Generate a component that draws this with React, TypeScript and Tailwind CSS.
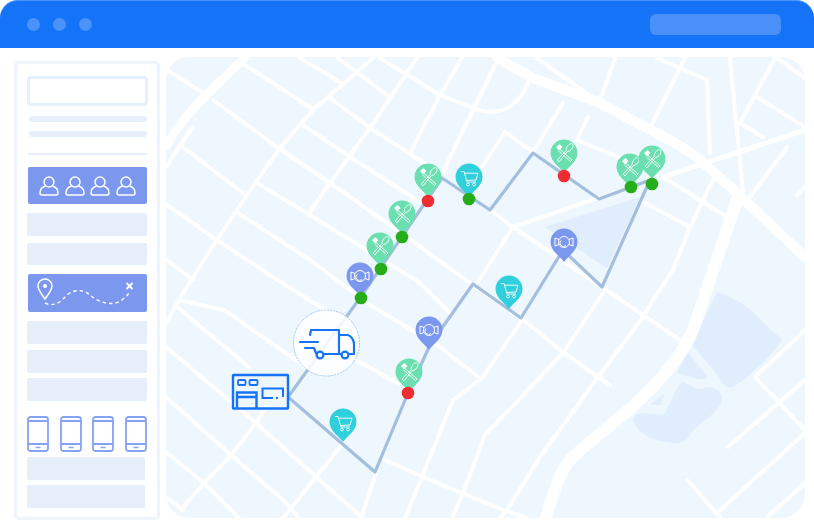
import React from 'react';

const thinRoads = [
  // top-left grid
  'M166 167 L180 145 L192 128',
  'M167 70 L203 93',
  'M213 100 L277 147 L330 183 L393 227 L470 283 L521 318 L563 352 L598 377 L610 385',
  'M245 65 L313 109',
  'M330 98 L373 130 L440 173',
  'M303 125 L350 157 L420 202',
  'M180 145 L243 193',
  'M257 183 L310 215 L420 283 L450 313',
  'M167 205 L217 240 L293 290 L346 323',
  'M238 213 L310 260 L370 305 L437 345 L480 378',
  'M167 260 L193 280',
  'M373 58 L313 110 L280 148 L255 183 L217 240 L193 277 L179 300 L166 323',
  'M417 58 L370 128 L330 183 L308 215',
  'M338 58 L387 95',
  'M300 58 L340 82',
  'M380 58 L440 95 L473 108 C485 113 500 114 512 105 C520 99 525 92 528 83',
  'M462 58 L440 95 L410 153',
  'M495 65 L472 112 L443 172',
  'M505 132 L482 167',
  'M505 132 L533 152',
  'M563 103 L533 152',
  'M588 117 L577 140 L630 162',
  'M537 58 L600 103',
  'M615 58 L600 100',
  'M490 210 L513 227 L603 288 L680 340',
  'M513 227 L598 198',
  'M513 227 L477 283',
  // right side
  'M657 58 L707 80 L710 153',
  'M685 58 L650 128',
  'M730 58 L743 193',
  'M775 58 L740 123 L763 137',
  'M757 97 L805 127',
  'M777 58 L805 78',
  'M787 147 L750 197',
  'M663 177 L727 217',
  'M643 202 L690 227',
  'M713 180 L690 227 L673 270 L653 300 L643 317 L598 377 L540 457 L507 510 L500 518',
  'M797 195 L805 187',
  'M805 330 L755 377 L805 430',
  'M805 380 L728 447',
  'M805 433 L717 513',
  'M687 480 L720 517',
  'M805 483 L767 517',
  // bottom middle
  'M603 293 L563 353 L485 435 L463 493 L452 518',
  'M522 320 L482 378 L453 400 L422 477 L405 518',
  'M385 460 L423 477 L503 510 L527 518',
  'M376 473 L361 518',
  // bottom left
  'M179 300 L224 310 L306 367',
  'M330 345 L406 388',
  'M178 308 L249 367',
  'M166 347 L256 423 L316 477 L363 518',
  'M166 397 L231 455 L283 500 L299 518',
  'M166 452 L204 483 L239 518',
  'M166 497 L183 510',
  'M266 407 L256 423 L231 455 L204 483 L181 510',
  'M343 443 L316 477 L283 518',
];

const route = '288,397 375,472 408,393 430,345 473,284 521,318 563,250 602,287 650,180 599,199 533,153 490,210 442,178 360,298 288,397';

const pinPath = 'M0 20 C-3 15 -13.5 9 -13.5 0 A13.5 13.5 0 0 1 13.5 0 C13.5 9 3 15 0 20Z';

function Food({ x, y }: { x: number; y: number }) {
  return (
    <g transform={`translate(${x} ${y})`}>
      <path d={pinPath} fill="#6bdfb0" />
      <g fill="none" stroke="#fff" strokeWidth="0.9">
        <path d="M-4 -3.5 L8 7 L6.5 8.5 L-5.5 -2" />
        <path d="M-7 7 L-5 8.8 L3.5 -1.5 C6 -1.5 8.5 -4 9 -7 C9.3 -9.5 7 -10 5 -8.5 C3 -7 2 -4 2.2 -2.5 Z" />
      </g>
      <path d="M-8 -6 L-4.5 -9 L-1.5 -6 L-5 -2.5 Z" fill="#fff" />
    </g>
  );
}

function Fish({ x, y }: { x: number; y: number }) {
  return (
    <g transform={`translate(${x} ${y})`}>
      <path d={pinPath} fill="#7c98ee" />
      <g fill="none" stroke="#fff" strokeWidth="1">
        <circle cx="0" cy="0" r="5.5" />
        <path d="M-5 -2.5 L-9 -4 L-9 4 L-5 2.5" />
        <path d="M5 -2.5 L9 -4 L9 4 L5 2.5" />
        <path d="M-3 -1.5 A3.5 3.5 0 0 0 2 3.5" />
      </g>
    </g>
  );
}

function Cart({ x, y }: { x: number; y: number }) {
  return (
    <g transform={`translate(${x} ${y})`}>
      <path d={pinPath} fill="#2fd0dc" />
      <g fill="none" stroke="#fff" strokeWidth="0.9">
        <path d="M-8 -5.5 L-5 -5.5 L-2 5 L7 5" />
        <path d="M-4.6 -3.8 L9 -3.8 L7 3 L-2.6 3.5" />
        <circle cx="-1" cy="7.5" r="1.4" />
        <circle cx="5" cy="7.5" r="1.4" />
      </g>
    </g>
  );
}

function Dot({ x, y, red }: { x: number; y: number; red?: boolean }) {
  return <circle cx={x} cy={y} r="6.3" fill={red ? '#ee2d32' : '#25ae1a'} />;
}

function MapArt() {
  return (
    <svg viewBox="166 57 639 461" className="block w-full h-full">
      <path d="M545 227 L640 197 L607 268 Z" fill="#e0edfc" />
      <path d="M717 292 C730 296 740 302 747 307 C760 318 770 332 782 338 C784 342 750 378 733 387 C728 388 724 386 722 382 C715 370 703 358 692 345 Z" fill="#e0edfc" />
      <path d="M688 352 L708 378 C703 382 690 376 677 373 Z" fill="#e0edfc" />
      <path d="M665 393 L650 405 L660 405 Z" fill="#e0edfc" />
      <path d="M682 382 C690 384 695 390 703 389 C710 385 720 388 722 397 C722 410 700 424 693 430 C688 440 682 444 675 443 C660 442 640 438 633 420 C634 412 645 412 663 415 C668 412 673 392 682 382 Z" fill="#e0edfc" />
      <g fill="none" stroke="#fff" strokeLinecap="round" strokeLinejoin="round">
        <path d="M245 57 C222 82 190 105 166 146" strokeWidth="9" />
        <path d="M497 58 L533 78 L600 103 C640 125 680 143 700 160 L737 193 L805 257" strokeWidth="10" />
        <path d="M738 197 L720 250 L693 330 C685 350 665 375 643 397 C625 415 590 440 570 460 C560 472 552 495 545 522" strokeWidth="12" />
        <path d="M663 177 L693 167 L745 150 L805 130" strokeWidth="5" />
        <g strokeWidth="4">
          {thinRoads.map((d) => (
            <path key={d} d={d} />
          ))}
        </g>
      </g>
      <polyline points={route} fill="none" stroke="#a3bfdd" strokeWidth="3.2" strokeLinejoin="round" />

      <Fish x={360} y={276} />
      <Dot x={361} y={298} />
      <Food x={380} y={246} />
      <Dot x={381} y={269} />
      <Food x={402} y={214} />
      <Dot x={402} y={237} />
      <Food x={428} y={177} />
      <Dot x={428} y={201} red />
      <Cart x={469} y={177} />
      <Dot x={469} y={199} />
      <Food x={564} y={153} />
      <Dot x={564} y={176} red />
      <Food x={630} y={167} />
      <Dot x={631} y={187} />
      <Food x={652} y={159} />
      <Dot x={652} y={184} />
      <Fish x={564} y={242} />
      <Cart x={509} y={289} />
      <Fish x={429} y={330} />
      <Food x={409} y={372} />
      <Dot x={408} y={393} red />
      <Cart x={343} y={422} />

      <circle cx="326.5" cy="343" r="33" fill="#fff" fillOpacity="0.85" stroke="#8fbcf3" strokeWidth="0.8" strokeDasharray="2 1" />
      <g fill="none" stroke="#1673f7" strokeWidth="2.2" strokeLinecap="round" strokeLinejoin="round">
        <path d="M310 335 L311 330 L339 330 L339 354 L324 354" />
        <path d="M339 335 L348 335 C351 336 354 340 354 344 L354 354 L349 354" />
        <path d="M339 354 L341 354" />
        <path d="M300 342 L318 342 M305 348 L314 348 L316 353" />
        <circle cx="320" cy="355" r="3.4" />
        <circle cx="345" cy="355" r="3.4" />
      </g>
      <g fill="none" stroke="#1673f7" strokeWidth="2.4">
        <rect x="233" y="375" width="55" height="33.5" rx="0.5" />
        <path d="M237 408 L237 392.5 L256.5 392.5 L256.5 408 M237 397 L256.5 397" />
        <rect x="238" y="380" width="7.5" height="5" rx="1" strokeWidth="1.8" />
        <rect x="249.5" y="380" width="8" height="5" rx="1" strokeWidth="1.8" />
        <path d="M283 397 L283 388.5 L262.5 388.5 L262.5 398 L273 398 M276 398 L278 398" strokeWidth="2" />
      </g>
    </svg>
  );
}

function Person() {
  return (
    <svg width="20" height="20" viewBox="0 0 20 20" fill="none" stroke="#fff" strokeWidth="1.5">
      <circle cx="10" cy="6" r="5" />
      <path d="M6.5 10 C3 11 1 14 1 17 C1 18.5 2 19 3 19 L17 19 C18 19 19 18.5 19 17 C19 14 17 11 13.5 10" />
    </svg>
  );
}

function Phone() {
  return (
    <svg width="22" height="36" viewBox="0 0 22 36" fill="none" stroke="#85a3f2" strokeWidth="1.8">
      <rect x="1" y="1" width="20" height="34" rx="2.5" />
      <path d="M1 5 L21 5 M1 28 L21 28" />
      <path d="M8.5 31.5 L13.5 31.5" strokeWidth="1.5" />
    </svg>
  );
}

export default function App() {
  return (
    <div className="w-[814px] h-[530px] bg-white overflow-hidden">
      <header className="h-12 bg-[#1573f7] border-t border-[#4c92f8] rounded-t-[18px] flex items-center pl-[27px] pr-[33px]">
        <div className="flex gap-[13px]">
          <span className="w-[13px] h-[13px] rounded-full bg-[#4b93fb]" />
          <span className="w-[13px] h-[13px] rounded-full bg-[#4b93fb]" />
          <span className="w-[13px] h-[13px] rounded-full bg-[#4b93fb]" />
        </div>
        <div className="ml-auto w-[131px] h-[21px] rounded-md bg-[#4a90f9]" />
      </header>
      <div className="flex items-start">
        <aside className="ml-[14px] mt-[13px] w-[146px] h-[459px] border-[3px] border-[#eef4fe] rounded-[5px] bg-white pl-[10px] pr-[9px] pt-3">
          <div className="h-[30px] w-[121px] border-[3px] border-[#e9f0fd] rounded-[4px]" />
          <div className="ml-[2px] mt-[10px] h-[6px] w-[118px] rounded-full bg-[#e8effc]" />
          <div className="ml-[2px] mt-[9px] h-[6px] w-[118px] rounded-full bg-[#e8effc]" />
          <div className="ml-[1px] mt-[16px] h-[2px] w-[119px] bg-[#e8effc]" />
          <div className="ml-[1px] mt-[12px] h-[37px] w-[119px] rounded-[2px] bg-[#7b97ee] flex items-center pl-[11px] gap-[5.5px]">
            <Person />
            <Person />
            <Person />
            <Person />
          </div>
          <div className="mt-[9px] h-[23px] w-[120px] rounded-[2px] bg-[#e6eefb]" />
          <div className="mt-[7px] h-[22px] w-[120px] rounded-[2px] bg-[#e6eefb]" />
          <div className="ml-[1px] mt-[9px] h-[38px] w-[119px] rounded-[2px] bg-[#7b97ee]">
            <svg width="119" height="38" viewBox="0 0 119 38" fill="none" stroke="#fff">
              <path d="M17 25 C13 19 10 16 10 12 A7 7 0 0 1 24 12 C24 16 21 19 17 25 Z" strokeWidth="1.5" />
              <circle cx="17" cy="12" r="2" fill="#fff" stroke="none" />
              <path d="M17 29 C25 33 32 29 38 22 C45 15 55 15 62 21 C70 28 85 34 95 25 C98 23 101 20 101 18" strokeWidth="1.4" strokeDasharray="3.5 3" />
              <path d="M98.5 9 L104.5 15 M104.5 9 L98.5 15" strokeWidth="1.8" />
            </svg>
          </div>
          <div className="mt-[9px] h-[23px] w-[120px] rounded-[2px] bg-[#e6eefb]" />
          <div className="mt-[6px] h-[23px] w-[120px] rounded-[2px] bg-[#e6eefb]" />
          <div className="mt-[5px] h-[23px] w-[120px] rounded-[2px] bg-[#e6eefb]" />
          <div className="mt-[15px] w-[120px] flex justify-between">
            <Phone />
            <Phone />
            <Phone />
            <Phone />
          </div>
          <div className="-ml-[0.5px] mt-[5px] h-[23px] w-[118px] rounded-[2px] bg-[#e6eefb]" />
          <div className="-ml-[0.5px] mt-[5px] h-[23px] w-[118px] rounded-[2px] bg-[#e6eefb]" />
        </aside>
        <main className="ml-[6px] mt-[9px] w-[639px] h-[461px] rounded-[24px] overflow-hidden bg-[#eef6fe]">
          <MapArt />
        </main>
      </div>
    </div>
  );
}
